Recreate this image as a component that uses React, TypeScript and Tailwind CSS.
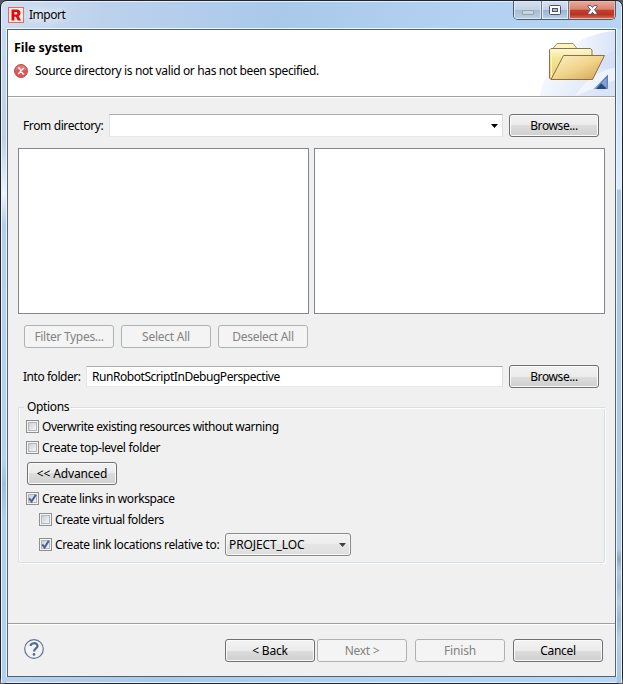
import type { ReactNode } from 'react';

type ButtonProps = { children: ReactNode; disabled?: boolean; className?: string };

function Button({ children, disabled = false, className = '' }: ButtonProps) {
  const look = disabled
    ? 'border-[#adb2b5] bg-[#f4f4f4] text-[#838383]'
    : 'border-[#707070] bg-[linear-gradient(#f2f2f2_0%,#ebebeb_50%,#dddddd_50%,#cfcfcf_100%)] text-black shadow-[inset_0_0_0_1px_#fafafa]';
  return (
    <button
      disabled={disabled}
      className={`flex h-[23px] w-[90px] shrink-0 items-center justify-center rounded-[3px] border whitespace-nowrap ${look} ${className}`}
    >
      {children}
    </button>
  );
}

type CheckProps = { label: string; checked?: boolean; className?: string; textClass?: string };

function Check({ label, checked = false, className = '', textClass = '' }: CheckProps) {
  return (
    <label className={`flex h-[13px] items-center gap-[3px] whitespace-nowrap ${className}`}>
      <span className="flex size-[13px] shrink-0 items-center justify-center border border-[#8e8f8f] bg-[#f4f4f4]">
        <span className="flex size-[9px] items-center justify-center border border-[#b3b8bd] bg-linear-to-br from-[#cbcfd5] to-[#f6f6f6]">
          {checked && (
            <svg className="size-[9px] shrink-0 overflow-visible" viewBox="0 0 9 9">
              <path d="M1.2 4.3 L3.6 7.5 L7.8 0.8" fill="none" stroke="#4a5f97" strokeWidth="2" />
            </svg>
          )}
        </span>
      </span>
      <span className={textClass}>{label}</span>
    </label>
  );
}

function TitleBar() {
  return (
    <div className="flex h-[28px] shrink-0 justify-between pl-[7px]">
      <div className="flex h-[28px] items-center">
        <svg className="size-4" viewBox="0 0 16 16">
          <rect x="0.5" y="0.5" width="15" height="15" fill="#fff1e8" stroke="#e8685f" />
          <path
            fillRule="evenodd"
            fill="#e30b0b"
            d="M3.5 2.5H8.6C11.4 2.5 12.5 3.9 12.5 5.9C12.5 7.5 11.7 8.5 10.6 9L13 13.5H9.8L7.9 9.7H6.4V13.5H3.5ZM6.4 4.9V7.4H8.1C9.8 7.4 9.8 4.9 8.1 4.9Z"
          />
        </svg>
        <span className="ml-[5px] tracking-[-0.5px] [text-shadow:0_0_8px_#fff,0_0_12px_#fff]">Import</span>
      </div>
      <div className="mr-[6px] flex h-[19px] w-[103px] overflow-hidden rounded-b-[5px] border border-t-0 border-[#4d5b70]">
        <div className="flex w-[28px] items-center justify-center border-r border-[#69798e] bg-[linear-gradient(#d3e0ed_0%,#c3d3e5_48%,#a6bad0_50%,#bdd0e4_100%)] shadow-[inset_0_0_0_1px_#dce8f5]">
          <span className="mt-[5px] h-[5px] w-[12px] rounded-[1px] border border-[#93a3b3] bg-[#cbd6e1]" />
        </div>
        <div className="flex w-[27px] items-center justify-center border-r border-[#69798e] bg-[linear-gradient(#d5e2f1_0%,#c2d3e8_48%,#9bb2cc_50%,#b9d3ec_100%)] shadow-[inset_0_0_0_1px_#e4effa]">
          <svg className="h-[10px] w-[12px]" viewBox="0 0 12 10">
            <rect x="0.5" y="0.5" width="11" height="9" rx="1" fill="#fff" stroke="#4b536b" />
            <rect x="3.5" y="3.5" width="5" height="3" fill="#a9bed7" stroke="#4b536b" />
          </svg>
        </div>
        <div className="flex flex-1 items-center justify-center bg-[linear-gradient(#e9aa9c_0%,#d98473_46%,#c14130_50%,#b93421_75%,#dc7358_100%)] shadow-[inset_0_0_0_1px_#efb5a5]">
          <svg className="h-[10px] w-[11px]" viewBox="0 0 12 11">
            <path
              d="M1 0.7H4.3L6 2.8L7.7 0.7H11V2L8.2 5.3L11 8.7V10.2H7.6L6 8.1L4.4 10.2H1V8.7L3.8 5.3L1 2Z"
              fill="#fff"
              stroke="#535666"
            />
          </svg>
        </div>
      </div>
    </div>
  );
}

function HeaderArt() {
  return (
    <svg className="h-[66px] w-[77px] shrink-0" viewBox="538 30 77 66">
      <defs>
        <linearGradient id="wash" x1="0" y1="0" x2="1" y2="0.3">
          <stop offset="0" stopColor="#fbfcff" />
          <stop offset="0.4" stopColor="#eff3fc" />
          <stop offset="1" stopColor="#dae4f7" />
        </linearGradient>
        <linearGradient id="band" x1="0" y1="0" x2="1" y2="0">
          <stop offset="0" stopColor="#f6f9fe" />
          <stop offset="1" stopColor="#d9e4f8" />
        </linearGradient>
        <linearGradient id="back" x1="0" y1="0" x2="0" y2="1">
          <stop offset="0" stopColor="#fff9d5" />
          <stop offset="0.35" stopColor="#f2e58f" />
          <stop offset="1" stopColor="#e9d078" />
        </linearGradient>
        <linearGradient id="front" x1="0" y1="0" x2="1" y2="1">
          <stop offset="0" stopColor="#fcf0c6" />
          <stop offset="0.5" stopColor="#f1d58c" />
          <stop offset="1" stopColor="#cfa257" />
        </linearGradient>
        <linearGradient id="corner" x1="0" y1="1" x2="1" y2="0">
          <stop offset="0" stopColor="#87a5cf" />
          <stop offset="1" stopColor="#5278b3" />
        </linearGradient>
      </defs>
      <path d="M573 45C585 37 600 32 615 31V96H573Z" fill="url(#band)" />
      <path d="M540 96C541 84 548 70 560 62L615 50V96Z" fill="url(#wash)" />
      <path d="M592 68C600 58 607 53 615 51V68Z" fill="#cfdcf5" opacity="0.5" />
      <path d="M575 96C585 80 600 70 615 68V80Z" fill="#fff" opacity="0.5" />
      <path d="M553 48.5L557 43.5H573L577 48.5Z" fill="#fff5c0" stroke="#a58b60" />
      <path d="M549.5 50L551 48.5H590.5L592 50V79.5H551L549.5 78Z" fill="url(#back)" stroke="#8f704f" />
      <path d="M551.5 78V51" stroke="#fff4b0" />
      <path d="M551 79.5L563.5 55.5H604.5L592.5 79.5Z" fill="url(#front)" stroke="#8f6d4b" strokeLinejoin="round" />
      <path d="M593.5 89L608 74.5V89Z" fill="url(#corner)" />
      <path d="M596 89L601 83.5L606 88V89Z" fill="#254983" />
      <path d="M602 82.5L606.5 78V87Z" fill="#86a5d0" />
    </svg>
  );
}

function Header() {
  return (
    <div className="flex h-[67px] shrink-0 justify-between border-b border-[#a0a0a0] bg-white">
      <div className="pl-[6px]">
        <h1 className="mt-[9px] h-[17px] text-[12.5px] leading-[17px] font-bold tracking-[-0.1px]">File system</h1>
        <div className="mt-[7px] flex h-4 items-center">
          <svg className="size-[14px]" viewBox="0 0 14 14">
            <circle cx="7" cy="7" r="6.5" fill="#db5656" stroke="#bf4f50" />
            <path d="M1.5 6.5A5.5 5.5 0 0 1 12.5 6.5Q7 4 1.5 6.5" fill="#e88b86" opacity="0.6" />
            <path d="M4 4H5.2L9 10H10.2M9.8 4L4.2 10" fill="none" stroke="#fff" strokeWidth="1.4" />
          </svg>
          <span className="ml-[7px] tracking-[-0.36px] whitespace-nowrap">
            Source directory is not valid or has not been specified.
          </span>
        </div>
      </div>
      <HeaderArt />
    </div>
  );
}

function Fields() {
  const edit = 'border border-t-[#abadb3] border-r-[#dbdfe6] border-b-[#e3e9ef] border-l-[#e2e3ea] bg-white';
  return (
    <>
      <div className="mt-[16px] flex h-[23px] items-center pl-[15px]">
        <span className="w-[86px] tracking-[-0.38px] whitespace-nowrap">From directory:</span>
        <div className={`mr-[6px] flex h-[23px] w-[394px] items-center justify-end pr-[4px] ${edit}`}>
          <svg className="h-[4px] w-[7px]" viewBox="0 0 7 4">
            <path d="M0 0H7L3.5 4Z" fill="#000" />
          </svg>
        </div>
        <Button className="tracking-[-0.4px]">Browse...</Button>
      </div>
      <div className="mt-[11px] flex gap-[5px] pl-[10px]">
        <div className="h-[166px] w-[291px] border border-[#828790] bg-white" />
        <div className="h-[166px] w-[291px] border border-[#828790] bg-white" />
      </div>
      <div className="mt-[11px] flex gap-[7px] pl-4">
        <Button disabled className="tracking-[-0.3px]">Filter Types...</Button>
        <Button disabled className="tracking-[-0.25px]">Select All</Button>
        <Button disabled className="tracking-[-0.3px]">Deselect All</Button>
      </div>
      <div className="mt-[17px] flex h-[23px] items-center pl-[15px]">
        <span className="w-[63px] tracking-[-0.45px] whitespace-nowrap">Into folder:</span>
        <div className={`mr-[6px] flex h-[21px] w-[417px] items-center pl-[5px] ${edit}`}>
          <span className="tracking-[-0.45px]">RunRobotScriptInDebugPerspective</span>
        </div>
        <Button className="tracking-[-0.4px]">Browse...</Button>
      </div>
    </>
  );
}

function Options() {
  return (
    <fieldset className="mt-[10px] ml-[10px] h-[165px] w-[587px]">
      <div className="flex h-[18px] items-center">
        <span className="h-px w-[6px] bg-[#d5dfe5]" />
        <legend className="w-[46px] pl-[3px] tracking-[-0.35px]">Options</legend>
        <span className="h-px flex-1 bg-[#d5dfe5] shadow-[0_1px_0_#fff]" />
      </div>
      <div className="-mt-[9px] h-[156px] rounded-[3px] border border-t-0 border-[#d5dfe5] pt-[13px] pl-[7px] shadow-[1px_1px_0_#fff,inset_1px_0_0_#fff]">
        <Check label="Overwrite existing resources without warning" textClass="tracking-[-0.46px]" />
        <Check label="Create top-level folder" className="mt-[8px]" textClass="tracking-[-0.3px]" />
        <Button className="mt-[8px] ml-px tracking-[-0.15px]">&lt;&lt; Advanced</Button>
        <Check checked label="Create links in workspace" className="mt-[7px]" textClass="tracking-[-0.42px]" />
        <Check label="Create virtual folders" className="mt-[8px] ml-[13px]" textClass="tracking-[-0.43px]" />
        <div className="mt-[7px] ml-[13px] flex h-[23px] items-center">
          <Check
            checked
            label="Create link locations relative to:"
            className="w-[186px]"
            textClass="tracking-[-0.36px]"
          />
          <div className="flex h-[23px] w-[126px] items-center justify-between rounded-[3px] border border-[#8a8a8a] bg-[linear-gradient(#f2f2f2_0%,#ededed_50%,#e5e5e5_50%,#dfdfdf_100%)] pr-[4px] pl-[3px] shadow-[inset_0_0_0_1px_#f8f8f8]">
            <span className="tracking-[-0.1px]">PROJECT_LOC</span>
            <svg className="h-[4px] w-[7px]" viewBox="0 0 7 4">
              <path d="M0 0H7L3.5 4Z" fill="#404040" />
            </svg>
          </div>
        </div>
      </div>
    </fieldset>
  );
}

function Footer() {
  return (
    <div className="mt-auto flex h-[53px] shrink-0 border-t border-[#a0a0a0] pt-[15px] pl-4 shadow-[inset_0_1px_0_#fff]">
      <svg className="size-5" viewBox="0 0 20 20">
        <circle cx="10" cy="10" r="9.3" fill="#f3f4f7" stroke="#607493" strokeWidth="1.2" />
        <path
          d="M6.5 7C6.8 3.4 13.5 3.2 13.5 7C13.5 9.6 10 9.2 10 12.6"
          fill="none"
          stroke="#506a94"
          strokeWidth="2.2"
        />
        <circle cx="10" cy="15.4" r="1.35" fill="#506a94" />
      </svg>
      <Button className="ml-[181px] tracking-[-0.2px]">&lt; Back</Button>
      <Button disabled className="ml-[2px] tracking-[-0.3px]">Next &gt;</Button>
      <Button disabled className="ml-[8px] tracking-[-0.2px]">Finish</Button>
      <Button className="ml-[8px] tracking-[-0.3px]">Cancel</Button>
    </div>
  );
}

export default function App() {
  return (
    <div className="h-[684px] w-[623px] overflow-hidden bg-[#55585c] font-['Noto_Sans','Open_Sans',sans-serif] text-[12px] leading-4 text-black">
      <div className="flex h-full w-full flex-col rounded-[7px] border border-[#20242e] bg-[linear-gradient(100deg,#cfdef0_0%,#bcd2ec_14%,#a9c9e9_38%,#b2d1f0_60%,#b8d7f6_100%)] shadow-[inset_0_0_0_1px_#e6f1fd]">
        <TitleBar />
        <div className="flex h-[654px]">
          <div className="w-[5px] shrink-0 border-l border-[#eaf4ff] bg-[linear-gradient(#c5d8ef_0px,#bdd1ea_110px,#edf3fb_165px,#b5cdec_195px,#b6d2f0_430px,#9fbedc_455px,#b1d0f0_490px,#b1d0f0_654px)]" />
          <div className="-mt-px flex h-[649px] w-[611px] shrink-0 border border-[#edf6ff] bg-[#f0f0f0]">
            <main className="flex h-[648px] w-[609px] flex-col border border-[#526174] bg-[#f0f0f0]">
              <Header />
              <div className="h-px shrink-0 bg-white" />
              <Fields />
              <Options />
              <Footer />
            </main>
          </div>
          <div className="w-[5px] shrink-0 border-r border-[#e5f3ff] bg-[linear-gradient(#c5def9_0px,#dcecff_160px,#a5c9ed_161px,#a9caec_520px,#8da7c0_530px,#aecaeb_543px,#9db9d7_557px,#b4ceeb_573px,#9ab7d5_590px,#b1cfef_610px,#a5c5e7_654px)]" />
        </div>
      </div>
    </div>
  );
}
